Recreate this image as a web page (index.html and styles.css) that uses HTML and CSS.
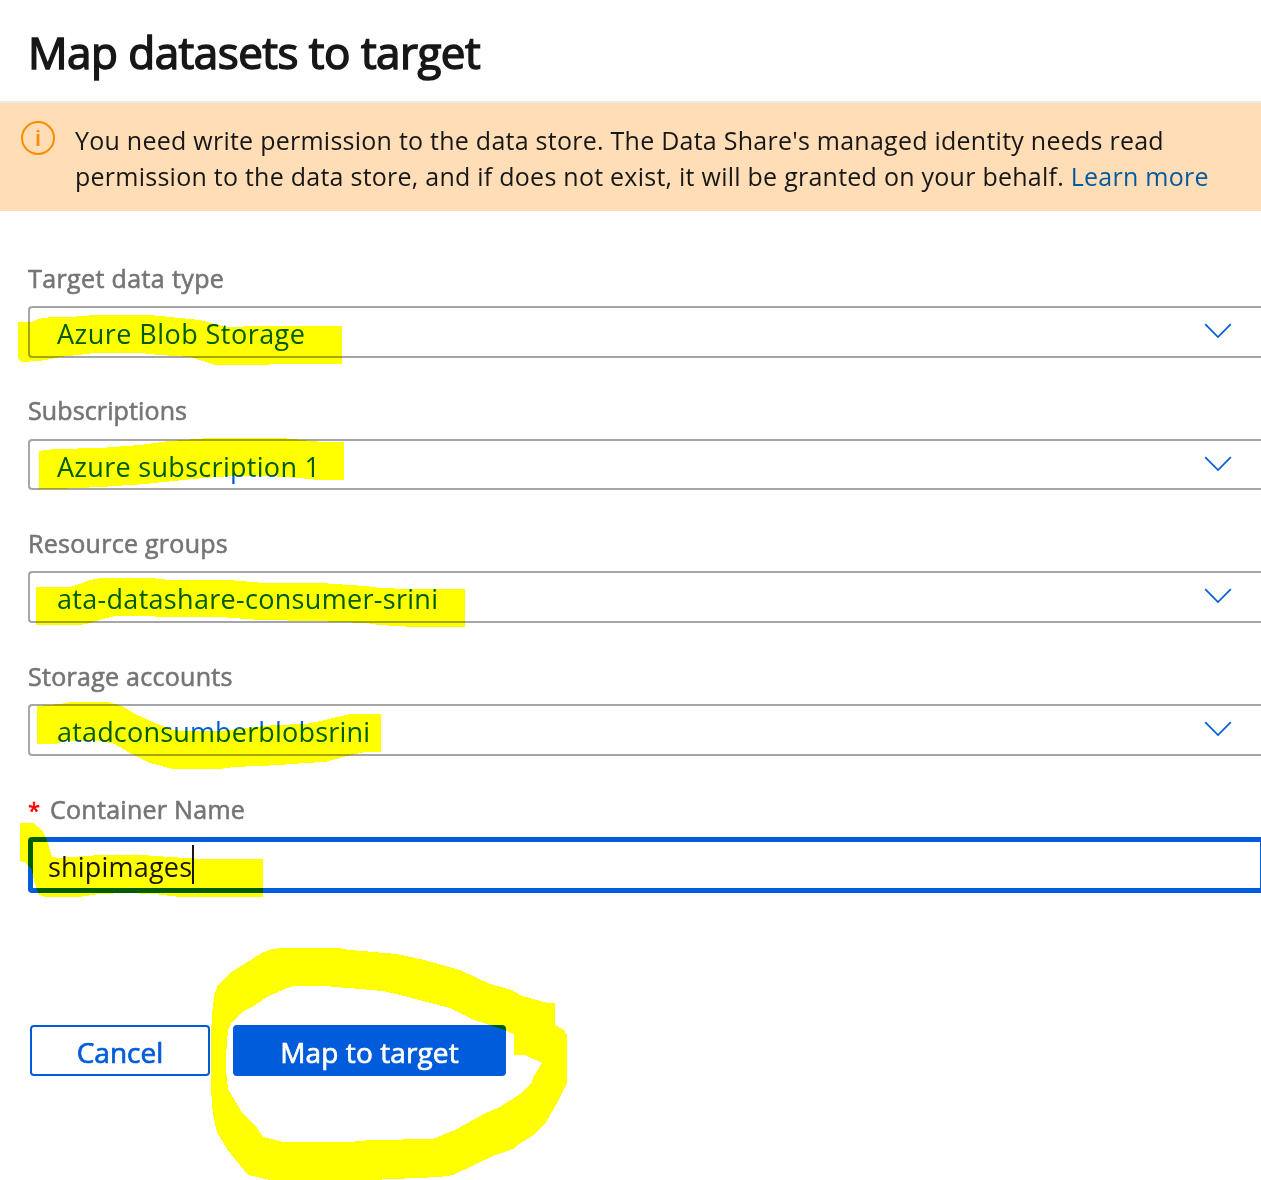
FILE: index.html
```html
<!DOCTYPE html>
<html lang="en">
<head>
<meta charset="utf-8">
<title>Map datasets to target</title>
<link rel="stylesheet" href="styles.css">
</head>
<body>
<main class="panel">
  <header class="panel-header"><h1 class="title">Map datasets to target</h1></header>
  <section class="notice">
    <svg class="notice-icon" width="34" height="34" viewBox="0 0 34 34"><circle cx="17" cy="17" r="16" fill="none" stroke="#ff8c00" stroke-width="2"/><path d="M17 13v12M17 9v2.3" stroke="#ff8c00" stroke-width="2.8"/></svg>
    <p class="notice-text"><span class="line">You need write permission to the data store. The Data Share's managed identity needs read</span><span class="line">permission to the data store, and if does not exist, it will be granted on your behalf. <a class="link">Learn more</a></span></p>
  </section>
  <form class="form">
    <div class="field">
      <label class="label"><span class="t-type">Target data type</span></label>
      <div class="select"><span class="value v-type">Azure Blob Storage</span><svg class="chevron" width="28" height="16" viewBox="0 0 28 16"><path d="M1.2 1.2 14 14 26.8 1.2"/></svg></div>
    </div>
    <div class="field">
      <label class="label"><span class="t-sub">Subscriptions</span></label>
      <div class="select"><span class="value">Azure subscription 1</span><svg class="chevron" width="28" height="16" viewBox="0 0 28 16"><path d="M1.2 1.2 14 14 26.8 1.2"/></svg></div>
    </div>
    <div class="field">
      <label class="label"><span>Resource groups</span></label>
      <div class="select"><span class="value">ata-datashare-consumer-srini</span><svg class="chevron" width="28" height="16" viewBox="0 0 28 16"><path d="M1.2 1.2 14 14 26.8 1.2"/></svg></div>
    </div>
    <div class="field">
      <label class="label"><span>Storage accounts</span></label>
      <div class="select"><span class="value v-account">atadconsumberblobsrini</span><svg class="chevron" width="28" height="16" viewBox="0 0 28 16"><path d="M1.2 1.2 14 14 26.8 1.2"/></svg></div>
    </div>
    <div class="field field-last">
      <label class="label"><span class="required">*</span><span>Container Name</span></label>
      <div class="input"><span class="input-value">shipimages</span><span class="caret"></span></div>
    </div>
    <div class="actions">
      <button type="button" class="button cancel">Cancel</button>
      <button type="button" class="button primary">Map to target</button>
    </div>
  </form>
  <svg class="marker" width="1261" height="1180" viewBox="0 0 1261 1180">
    <path d="M18 322H32L38 319 48 317.500 70 317 95 315H150L180 318 200 320 215 324 228 327 260 326H342V364H270L269 365H215L203 361 190 357 160 355 140 353H95L60 357 45 360 38 361 22 362 18 359Z"/>
    <path d="M39 451 55 449 100 448 140 445 170 441 210 438H282L302 440 323 442H344V480H318L299 478 270 476H230L193 479 145 484 100 487 57 489H39Z"/>
    <path d="M36 587H70L83 583 90 580 102 578H151L170 580H229L265 583H320L365 586 380 588 410 589H465V627H413L380 625 365 623 315 621 260 620 220 617 165 617 145 616H115L103 619 90 623 80 625H36Z"/>
    <path d="M37 706 60 704 71 702H108L122 706 135 714 155 723 173 730 185 731H220L275 725 305 724 325 720 350 714H381V752H365L347 756 325 762 305 763 280 765 235 767 219 769H173L150 763 130 753 115 744 100 741H65L55 744H37Z"/>
    <path d="M20 823H33L42 830 47 840 52 857 60 858 85 856 100 855H142L170 857 200 859H263V897H180L155 894 125 893 100 894 78 897H45L39 895 34 880 32 870 26 863 20 861Z"/>
    <path fill-rule="evenodd" d="M212 1015 214 997 218 985 230 973 262 953 272 949 284 948H339L350 950 397 954 424 960 460 970 490 984 512 990 522 996 548 1003H555V1025L564 1030 567 1035V1083L557 1103 546 1122 532 1136 519 1144 513 1149 495 1155 453 1175 440 1177 370 1180H270L248 1175 227 1149 217 1132 213 1115 211 1090V1035ZM228 1030 232 1022 242 1012 252 1007 267 997 280 991 293 986H325L383 991 400 995 450 1008 474 1020 502 1029 514 1034V1055H525L542 1063 534 1076 531 1084 520 1094 500 1107 484 1114 455 1130 433 1139 370 1140 350 1142H283L263 1137 257 1128 243 1114 228 1089 226 1070V1055Z"/>
  </svg>
</main>
</body>
</html>
```
FILE: styles.css
```css
* { box-sizing: border-box; }
body { margin: 0; background: #fff; color: #171717; font-family: "Open Sans", "Noto Sans", sans-serif; }
.panel { position: relative; width: 100%; height: 1180px; overflow: hidden; background: #fff; }
.panel-header { height: 103px; padding: 22px 0 0 28px; border-bottom: 2px solid #e8e8e8; }
.title { margin: 0; font-size: 44px; line-height: 60px; font-weight: 400; letter-spacing: -.52px; -webkit-text-stroke: 1.5px #171717; white-space: nowrap; }
.notice { display: flex; height: 108px; padding: 18px 0 0 21px; background: #ffddb6; }
.notice-icon { flex: none; }
.notice-text { margin: 1px 0 0 20px; font-size: 25px; line-height: 36px; letter-spacing: .25px; white-space: nowrap; }
.line { display: block; }
.link { color: #005a9e; }
.form { padding: 49.9px 0 0 28px; }
.field { height: 132.75px; }
.label { display: flex; height: 45px; color: #757575; font-size: 25px; line-height: 34px; letter-spacing: .28px; -webkit-text-stroke: .6px #757575; white-space: nowrap; }
.t-type { letter-spacing: .38px; }
.t-sub { margin-top: -1px; letter-spacing: .12px; }
.select { display: flex; align-items: center; justify-content: space-between; height: 51.8px; padding: 0 29px 0 27px; border: 2px solid #a6a6a6; border-right: 0; border-radius: 4px 0 0 4px; }
.value { padding-top: 4.2px; font-size: 27px; line-height: 38px; letter-spacing: .3px; color: #005cda; white-space: nowrap; }
.v-type { letter-spacing: .46px; }
.v-account { padding-top: 3px; letter-spacing: .18px; }
.chevron { flex: none; margin-top: -1.6px; fill: none; stroke: #005cda; stroke-width: 1.7; }
.field-last { height: 233.1px; }
.required { width: 22px; font-size: 22px; color: #f00; -webkit-text-stroke-color: #f00; }
.input { display: flex; align-items: center; height: 56px; padding-left: 15px; border: 5px solid #005cda; border-right-width: 1px; border-radius: 4px 0 0 4px; }
.input-value { padding-top: 4px; font-size: 27px; line-height: 38px; letter-spacing: .2px; }
.caret { width: 2px; height: 39px; margin-top: -1px; background: #171717; }
.actions { display: flex; gap: 23px; padding-left: 2px; }
.button { height: 51px; padding: 3px 0 0; border: 2px solid #005cda; border-radius: 4px; font: 400 28px/38px "Open Sans", "Noto Sans", sans-serif; white-space: nowrap; }
.cancel { width: 180px; background: #fff; color: #005cda; -webkit-text-stroke: .7px #005cda; }
.primary { width: 273px; background: #005cda; color: #fff; letter-spacing: .1px; -webkit-text-stroke: .7px #fff; }
.marker { position: absolute; inset: 0; mix-blend-mode: multiply; fill: #ff0; shape-rendering: crispEdges; pointer-events: none; }
```
